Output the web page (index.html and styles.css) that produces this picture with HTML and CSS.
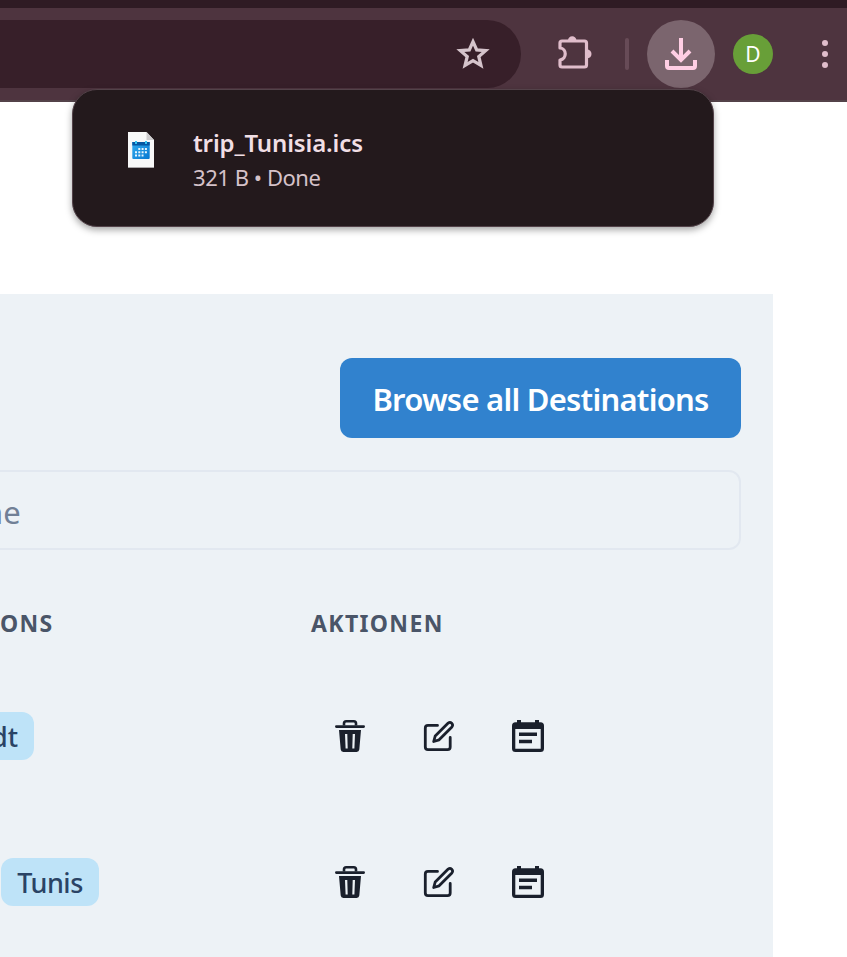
FILE: index.html
```html
<!DOCTYPE html>
<html lang="de">
<head>
<meta charset="utf-8">
<title>Trips</title>
<link rel="stylesheet" href="styles.css">
</head>
<body>
<svg class="defs" aria-hidden="true">
  <symbol id="trash" viewBox="0 0 30 32">
    <path d="M9 5.500V3.500Q9 1.300 11.200 1.300H18.800Q21 1.300 21 3.500V5.500" fill="none" stroke="currentColor" stroke-width="2.6"/>
    <path d="M1.300 6.600H28.700" stroke="currentColor" stroke-width="2.600" stroke-linecap="round"/>
    <path fill="currentColor" fill-rule="evenodd" d="M4 10H26L24.300 29.600Q24 32 21.700 32H8.300Q6 32 5.700 29.600ZM10 14L10.600 28.500H12.700L12.300 14ZM17.700 14L17.300 28.500H19.400L20 14Z"/>
  </symbol>
  <symbol id="edit" viewBox="0 0 32 32">
    <g fill="none" stroke="currentColor" stroke-width="2.800" stroke-linecap="round" stroke-linejoin="round">
      <path d="M14.500 5.400H5Q2.300 5.400 2.300 8.100V27Q2.300 29.700 5 29.700H24.500Q27.200 29.700 27.200 27V17.500"/>
      <path d="M10.700 21.500L12.200 16L25.200 3.100Q27 1.600 28.700 3.200Q30.400 5 28.900 6.900L16.100 19.800Z"/>
    </g>
  </symbol>
  <symbol id="calendar" viewBox="0 0 32 32">
    <path fill="currentColor" fill-rule="evenodd" d="M5 0H9V2.300H23V0H27V2.300H28.500Q32 2.300 32 5.800V28.500Q32 32 28.500 32H3.500Q0 32 0 28.500V5.800Q0 2.300 3.500 2.300H5ZM3.300 9V28.700H28.700V9Z"/>
    <path d="M7 14.300H25M7 21.500H20" stroke="currentColor" stroke-width="3.400"/>
  </symbol>
</svg>

<header class="browser">
  <div class="omnibox">
    <svg class="star" viewBox="0 0 34 34"><path fill="none" stroke="currentColor" stroke-width="3.300" d="M17 4.700L20.700 13L29.600 13.700L22.800 19.600L24.900 28.400L17 23.700L9.100 28.400L11.200 19.600L4.400 13.700L13.300 13Z"/></svg>
  </div>
  <svg class="puzzle" viewBox="0 0 36 36">
    <path fill="none" stroke="currentColor" stroke-width="3.200" stroke-linejoin="round" d="M5 7H27.500Q29.500 7 29.500 9V31Q29.500 33 27.500 33H5Q3 33 3 31V26C10 25 10 14.500 3 14V9Q3 7 5 7Z"/>
    <path fill="currentColor" d="M11 6.500A4.200 4.200 0 0 1 19.400 6.500ZM29.500 15.300Q34.500 16 34.500 20Q34.500 24 29.500 24.500Z"/>
  </svg>
  <span class="divider"></span>
  <span class="download"><svg viewBox="0 0 32 32"><g fill="none" stroke="currentColor" stroke-width="4"><path d="M16 0V22M7 13L16 22L25 13"/><path d="M2 22V28Q2 30 4 30H28Q30 30 30 28V22"/></g></svg></span>
  <span class="avatar">D</span>
  <span class="menu"><i></i><i></i><i></i></span>
</header>

<aside class="bubble">
  <svg class="file" viewBox="0 0 26 36">
    <defs><linearGradient id="sky" x2="1" y2="1"><stop stop-color="#34adf0"/><stop offset="1" stop-color="#0877d0"/></linearGradient></defs>
    <path fill="#f8f8f8" d="M0 0H18.500L26 8V35.500H0Z"/>
    <path fill="#cfcdcf" d="M18.500 0V8H26Z"/>
    <path fill="#aaa7a9" d="M0 35H26V36H0Z"/>
    <path fill="url(#sky)" d="M4.300 10H21.700V26Q21.700 27 20.700 27H5.300Q4.300 27 4.300 26Z"/>
    <path fill="#0757a2" d="M4.300 10H21.700V13.500H4.300Z"/>
    <path stroke="#38c5f4" stroke-width="2" d="M8 9V12M18 9V12"/>
    <path stroke="#e8f6ff" stroke-width="2" stroke-dasharray="2 1.300" d="M10.300 17H19M7 20.300H19M7 23.600H15.500"/>
  </svg>
  <div class="details"><div class="filename">trip_Tunisia.ics</div><div class="status">321 B • Done</div></div>
</aside>

<main class="panel">
  <button class="browse"><span>Browse all Destinations</span></button>
  <div class="search">ne</div>
  <div class="row heading"><div class="places"><span>ONS</span></div><div class="action-title">AKTIONEN</div></div>
  <div class="row">
    <div class="places"><span class="tag clipped">dt</span></div>
    <div class="actions"><svg class="trash"><use href="#trash"/></svg><svg class="edit"><use href="#edit"/></svg><svg class="calendar"><use href="#calendar"/></svg></div>
  </div>
  <div class="row">
    <div class="places"><span class="tag tunis">Tunis</span></div>
    <div class="actions"><svg class="trash"><use href="#trash"/></svg><svg class="edit"><use href="#edit"/></svg><svg class="calendar"><use href="#calendar"/></svg></div>
  </div>
</main>
</body>
</html>
```
FILE: styles.css
```css
* { box-sizing: border-box; }
body { margin: 0; height: 957px; overflow: hidden; background: #fff; font-family: "Noto Sans", "Open Sans", sans-serif; }
svg { display: block; }
.defs { display: none; }
.browser { display: flex; align-items: center; height: 102px; border-top: 8px solid #2f1b24; border-bottom: 2px solid #534249; background: #4e343f; }
.omnibox { width: 521px; height: 68px; padding: 17px 31px 0 0; border-radius: 0 34px 34px 0; background: #371f29; display: flex; justify-content: flex-end; }
.star { width: 34px; height: 34px; color: #d5c4cb; }
.puzzle { width: 36px; height: 36px; margin: -4px 0 0 36px; color: #e0bdcb; }
.divider { width: 4px; height: 32px; margin-left: 32px; border-radius: 2px; background: #674b57; }
.download { display: grid; place-items: center; width: 68px; height: 68px; margin-left: 18px; border-radius: 50%; background: #7b656e; color: #ffcee4; }
.download svg { width: 32px; height: 32px; }
.avatar { width: 40px; height: 40px; margin-left: 18px; border-radius: 50%; background: #689f38; color: #fff; font-size: 21px; line-height: 40px; text-align: center; }
.menu { display: grid; gap: 5px; margin-left: 49px; }
.menu i { width: 6px; height: 6px; border-radius: 50%; background: #e0bdcb; }
.bubble { position: absolute; left: 72px; top: 89px; width: 642px; height: 138px; display: flex; padding: 42px 55px; border: 1px solid #534249; border-radius: 25px; background: #23191c; box-shadow: 0 3px 7px rgba(0,0,0,.35); }
.file { width: 26px; height: 36px; }
.details { margin-left: 39px; margin-top: -7px; white-space: nowrap; }
.filename { color: #f1dfe5; font-size: 24px; font-weight: 600; line-height: 36px; letter-spacing: -.13px; }
.status { color: #d5c2c9; font-size: 22px; line-height: 32px; letter-spacing: -.45px; }
.panel { width: 773px; height: 663px; margin-top: 192px; padding: 64px 32px 0 0; background: #edf2f6; overflow: hidden; }
.browse { display: block; width: 401px; height: 80px; margin-left: auto; padding: 2px 0 0; border: 0; border-radius: 12px; background: #3182ce; color: #fff; font: 600 31px/78px "Noto Sans", sans-serif; white-space: nowrap; letter-spacing: -.76px; }
.search { height: 80px; margin: 32px 0 0 -2px; padding-top: 2px; border: 2px solid #e2e8f0; border-radius: 0 12px 12px 0; color: #718096; font-size: 31px; line-height: 76px; text-indent: -16px; }
.row { display: flex; align-items: center; height: 146px; }
.row.heading { height: 113px; padding-top: 35px; align-items: flex-start; color: #4a5568; font-size: 23px; font-weight: 700; line-height: 76px; letter-spacing: 1.35px; }
.places { width: 310px; flex: none; }
.tag { display: block; height: 48px; border-radius: 12px; background: #bee3f8; color: #2a4365; font-size: 27px; font-weight: 500; line-height: 50px; }
.clipped { width: 34px; border-radius: 0 12px 12px 0; text-indent: -9px; }
.tunis { width: 98px; margin-left: 1px; text-align: center; letter-spacing: -.5px; }
.actions { display: flex; color: #1a202c; padding-left: 25px; }
.action-title { padding-left: 1px; }
.trash { width: 30px; height: 32px; }
.edit { width: 32px; height: 32px; margin-left: 58px; }
.calendar { width: 32px; height: 32px; margin-left: 57px; }
```
